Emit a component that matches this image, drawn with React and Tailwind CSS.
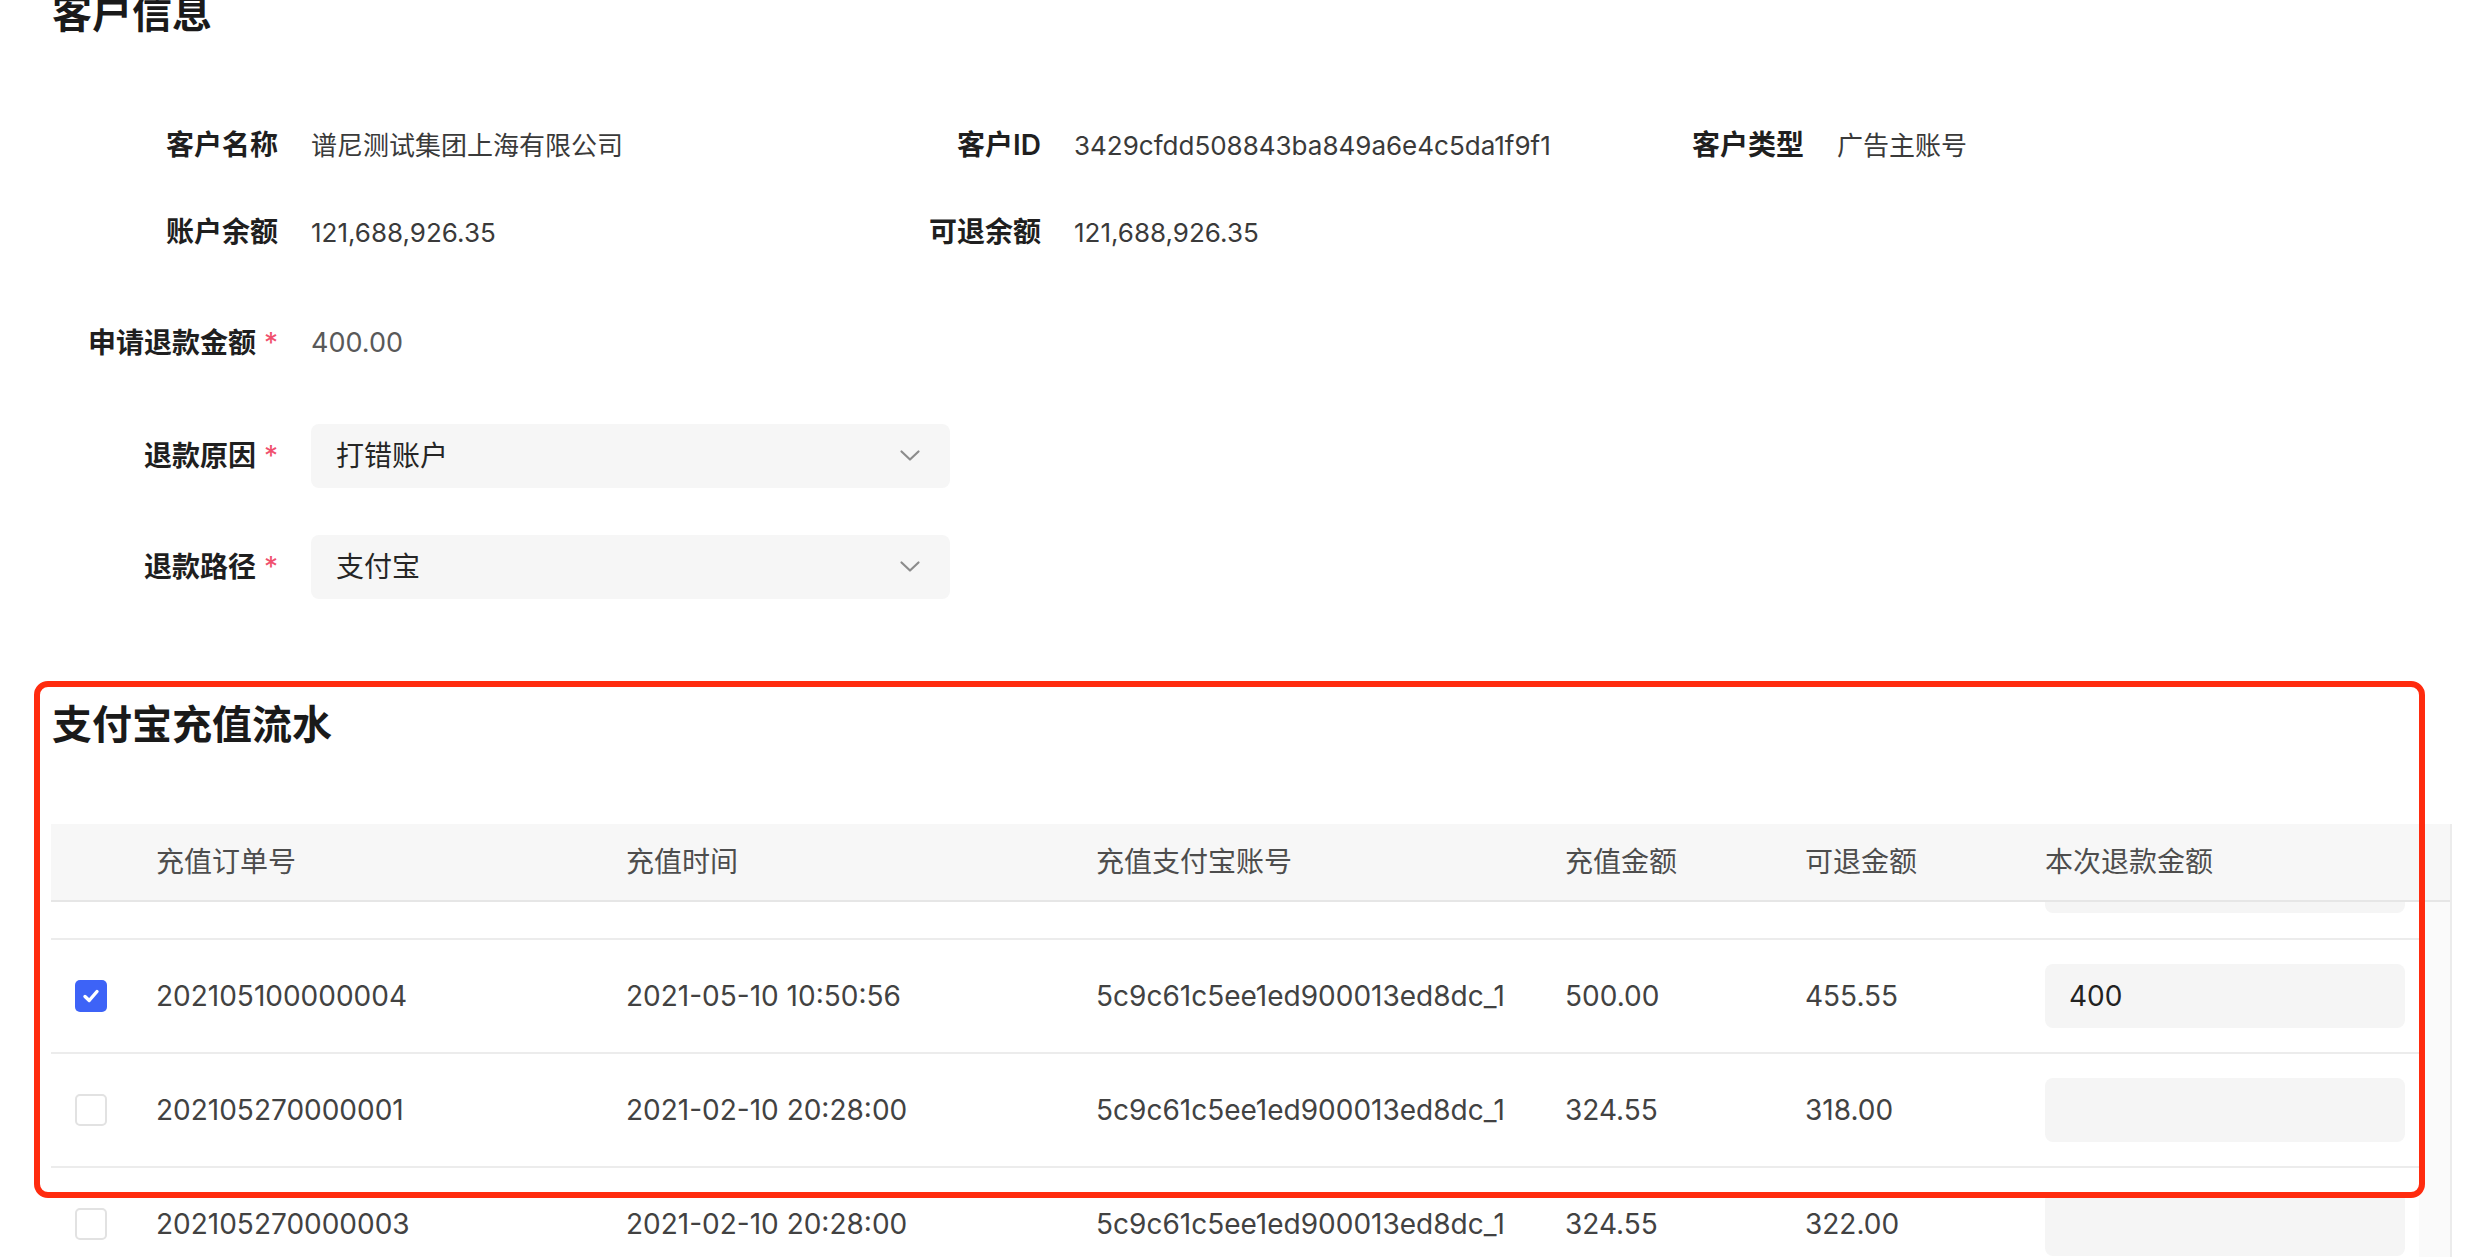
import React from "react";

const FONT = "font-['Inter','Noto_Sans_CJK_SC',sans-serif]";

function Checkbox({ checked }) {
  if (checked) {
    return (
      <div className="flex h-[32px] w-[32px] items-center justify-center rounded-[5px] bg-[#3d63f7]">
        <svg width="22" height="22" viewBox="0 0 22 22" fill="none">
          <path d="M5 11.5 L9.2 15.5 L17 6.5" stroke="#ffffff" strokeWidth="3.4" strokeLinecap="round" strokeLinejoin="round" />
        </svg>
      </div>
    );
  }
  return <div className="h-[32px] w-[32px] rounded-[5px] border-2 border-[#e2e2e2] bg-white" />;
}

function Chevron() {
  return (
    <svg width="22" height="14" viewBox="0 0 22 14" fill="none">
      <path d="M2.5 2.5 L11 10.5 L19.5 2.5" stroke="#8c8c8c" strokeWidth="2.2" strokeLinecap="round" strokeLinejoin="round" />
    </svg>
  );
}

function InfoCell({ label, value }) {
  return (
    <div className="flex items-center">
      <div className="w-[200px] text-right text-[28px] font-semibold text-[#1f1f1f]">{label}</div>
      <div className="ml-[33px] text-[26px] text-[#3a3a3a]">{value}</div>
    </div>
  );
}

function ReqLabel({ children }) {
  return (
    <div className="w-[200px] text-right text-[28px] font-semibold text-[#1f1f1f]">
      {children}
      <span className="ml-[8px] font-normal text-[#f0506e]">*</span>
    </div>
  );
}

function Select({ value }) {
  return (
    <div className="ml-[33px] flex h-[64px] w-[639px] items-center justify-between rounded-[8px] bg-[#f6f6f6] pl-[25px] pr-[29px]">
      <span className="text-[28px] text-[#262626]">{value}</span>
      <Chevron />
    </div>
  );
}

function Row({ r }) {
  return (
    <div className="flex h-[114px] w-[2368px] shrink-0 items-center border-b-2 border-[#ececec] text-[28px] text-[#424242]">
      <div className="w-[105px] pl-[24px]">
        <Checkbox checked={r.checked} />
      </div>
      <div className="w-[470px]">{r.id}</div>
      <div className="w-[470px]">{r.time}</div>
      <div className="w-[469px]">{r.acct}</div>
      <div className="w-[240px]">{r.amt}</div>
      <div className="w-[240px]">{r.ref}</div>
      <div className="w-[374px]">
        <div className="flex h-[64px] w-[360px] items-center rounded-[8px] bg-[#f5f5f5] pl-[24px] text-[28px] text-[#222222]">
          {r.input}
        </div>
      </div>
    </div>
  );
}

const rows = [
  { checked: true, id: "202105100000004", time: "2021-05-10 10:50:56", acct: "5c9c61c5ee1ed900013ed8dc_1", amt: "500.00", ref: "455.55", input: "400" },
  { checked: false, id: "202105270000001", time: "2021-02-10 20:28:00", acct: "5c9c61c5ee1ed900013ed8dc_1", amt: "324.55", ref: "318.00", input: "" },
  { checked: false, id: "202105270000003", time: "2021-02-10 20:28:00", acct: "5c9c61c5ee1ed900013ed8dc_1", amt: "324.55", ref: "322.00", input: "" },
];

export default function App() {
  return (
    <div className={`relative h-[1257px] w-full overflow-hidden bg-white ${FONT}`}>
      <div className="flex flex-col">
        <div className="mt-[-6px] h-[40px] pl-[52px] text-[40px] font-bold leading-[40px] text-[#1a1a1a]">客户信息</div>

        <div className="pl-[78px]">
          <div className="mt-[81px] grid h-[60px] grid-cols-[763px_763px_763px] items-center">
            <InfoCell label="客户名称" value="谱尼测试集团上海有限公司" />
            <InfoCell label="客户ID" value="3429cfdd508843ba849a6e4c5da1f9f1" />
            <InfoCell label="客户类型" value="广告主账号" />
          </div>
          <div className="mt-[27px] grid h-[60px] grid-cols-[763px_763px_763px] items-center">
            <InfoCell label="账户余额" value="121,688,926.35" />
            <InfoCell label="可退余额" value="121,688,926.35" />
          </div>
          <div className="mt-[51px] flex h-[60px] items-center">
            <ReqLabel>申请退款金额</ReqLabel>
            <div className="ml-[33px] text-[27px] text-[#595959]">400.00</div>
          </div>
          <div className="mt-[51px] flex h-[64px] items-center">
            <ReqLabel>退款原因</ReqLabel>
            <Select value="打错账户" />
          </div>
          <div className="mt-[47px] flex h-[64px] items-center">
            <ReqLabel>退款路径</ReqLabel>
            <Select value="支付宝" />
          </div>
        </div>

        <div className="mt-[106px] h-[40px] pl-[52px] text-[40px] font-bold leading-[40px] text-[#1a1a1a]">支付宝充值流水</div>

        <div className="ml-[51px] mt-[79px] w-[2401px] border-r-2 border-[#ececec]">
          <div className="flex h-[78px] items-center border-b-2 border-[#e6e6e6] bg-[#f7f7f7] text-[28px] text-[#4d4d4d]">
            <div className="w-[105px]" />
            <div className="w-[470px]">充值订单号</div>
            <div className="w-[470px]">充值时间</div>
            <div className="w-[469px]">充值支付宝账号</div>
            <div className="w-[240px]">充值金额</div>
            <div className="w-[240px]">可退金额</div>
            <div className="w-[374px]">本次退款金额</div>
          </div>
          <div className="flex">
            <div className="flex w-[2368px] flex-col">
              <div className="flex h-[38px] items-start border-b-2 border-[#ececec] pl-[1994px]">
                <div className="h-[11px] w-[360px] rounded-b-[8px] bg-[#f5f5f5]" />
              </div>
              {rows.map((r) => (
                <Row key={r.id} r={r} />
              ))}
            </div>
            <div className="flex-1 bg-[#fafafa]" />
          </div>
        </div>
      </div>

      <div className="pointer-events-none absolute left-[34px] top-[681px] h-[517px] w-[2391px] rounded-[14px] border-[6px] border-[#ff2b0e]" />
    </div>
  );
}
